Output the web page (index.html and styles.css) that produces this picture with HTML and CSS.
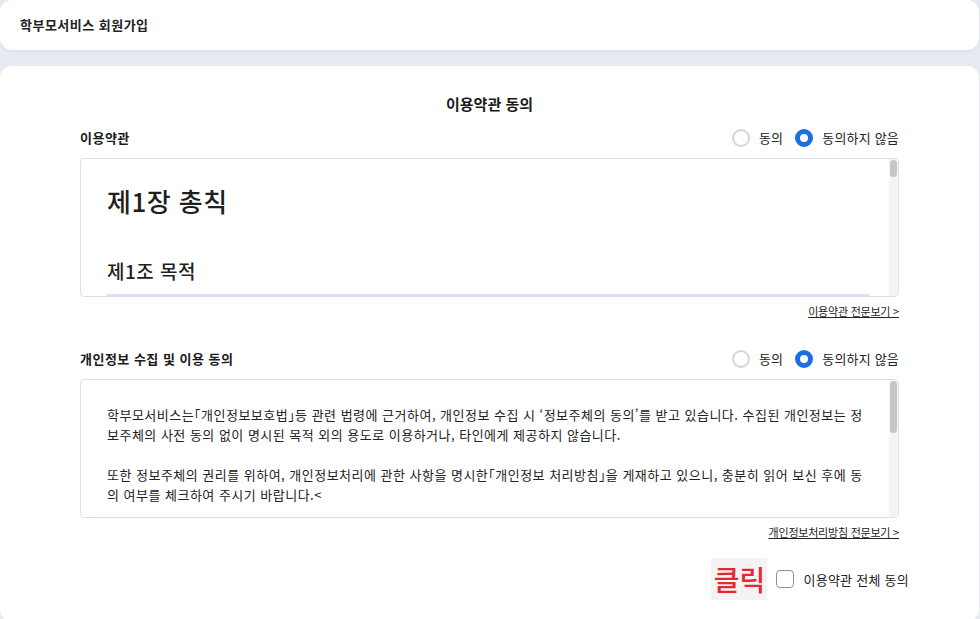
FILE: index.html
```html
<!DOCTYPE html>
<html lang="ko">
<head>
<meta charset="utf-8">
<title>학부모서비스 회원가입</title>
<link rel="stylesheet" href="styles.css">
</head>
<body>
<header class="topbar">
  <h1 class="topbar-title">학부모서비스 회원가입</h1>
</header>
<main class="card">
  <h2 class="page-title">이용약관 동의</h2>

  <section class="agree">
    <div class="agree-head">
      <h3 class="agree-label">이용약관</h3>
      <div class="radios">
        <label class="radio"><span class="radio-dot"></span><span>동의</span></label>
        <label class="radio"><span class="radio-dot is-checked"></span><span>동의하지 않음</span></label>
      </div>
    </div>
    <div class="terms-box">
      <div class="terms-content">
        <div class="terms-h1">제1장 총칙</div>
        <div class="terms-h2">제1조 목적</div>
      </div>
      <div class="scrollbar"><span class="thumb thumb-short"></span></div>
    </div>
    <div class="more"><a href="#" class="more-link">이용약관 전문보기 &gt;</a></div>
  </section>

  <section class="agree agree-second">
    <div class="agree-head">
      <h3 class="agree-label">개인정보 수집 및 이용 동의</h3>
      <div class="radios">
        <label class="radio"><span class="radio-dot"></span><span>동의</span></label>
        <label class="radio"><span class="radio-dot is-checked"></span><span>동의하지 않음</span></label>
      </div>
    </div>
    <div class="terms-box">
      <div class="terms-content terms-text">
        <p>학부모서비스는「개인정보보호법」등 관련 법령에 근거하여, 개인정보 수집 시 ‘정보주체의 동의’를 받고 있습니다. 수집된 개인정보는 정보주체의 사전 동의 없이 명시된 목적 외의 용도로 이용하거나, 타인에게 제공하지 않습니다.</p>
        <p>또한 정보주체의 권리를 위하여, 개인정보처리에 관한 사항을 명시한「개인정보 처리방침」을 게재하고 있으니, 충분히 읽어 보신 후에 동의 여부를 체크하여 주시기 바랍니다.&lt;</p>
      </div>
      <div class="scrollbar"><span class="thumb thumb-long"></span></div>
    </div>
    <div class="more"><a href="#" class="more-link">개인정보처리방침 전문보기 &gt;</a></div>
  </section>

  <div class="all-agree">
    <span class="click-tag">클릭</span>
    <label class="check"><span class="check-box"></span><span>이용약관 전체 동의</span></label>
  </div>
</main>
</body>
</html>
```

FILE: styles.css
```css
* { box-sizing: border-box; }
html, body { margin: 0; padding: 0; }
body {
  background: #e8ecf2;
  font-family: "Noto Sans CJK KR", "Noto Sans", sans-serif;
  color: #1f1f1f;
  letter-spacing: 0.03em;
  height: 619px;
  overflow: hidden;
}
.topbar {
  height: 50px;
  background: #fff;
  border-radius: 12px;
  margin-right: 1px;
  display: flex;
  align-items: center;
  padding-left: 20px;
  box-shadow: 0 1px 4px rgba(40, 60, 90, 0.08);
}
.topbar-title {
  margin: 0;
  font-size: 13px;
  font-weight: 700;
  color: #222;
  line-height: 20px;
}
.card {
  margin-top: 16px;
  margin-right: 1px;
  background: #fff;
  border-radius: 12px;
  padding: 28px 80px 0 80px;
  height: 555px;
}
.page-title {
  margin: 0;
  text-align: center;
  font-size: 15px;
  font-weight: 700;
  letter-spacing: 0;
  line-height: 20px;
  color: #1a1a1a;
}
.agree { margin-top: 14px; }
.agree-second { margin-top: 30px; }
.agree-head {
  display: flex;
  justify-content: space-between;
  align-items: center;
  height: 20px;
}
.agree-label {
  margin: 0;
  font-size: 13px;
  font-weight: 700;
  line-height: 20px;
  color: #1a1a1a;
}
.radios { display: flex; align-items: center; gap: 12px; }
.radio {
  display: flex;
  align-items: center;
  gap: 9px;
  font-size: 13px;
  letter-spacing: 0.015em;
  color: #222;
  line-height: 20px;
}
.radio-dot {
  width: 18px;
  height: 18px;
  border-radius: 50%;
  border: 2px solid #d2d6dc;
  background: #fff;
}
.radio-dot.is-checked { border: 5px solid #1a6fe3; }
.terms-box {
  margin-top: 10px;
  height: 139px;
  border: 1px solid #d8e1ef;
  border-radius: 4px;
  display: flex;
  overflow: hidden;
}
.terms-content {
  flex: 1;
  padding: 22px 26px 0 26px;
  overflow: hidden;
}
.terms-h1 {
  font-size: 26px;
  font-weight: 500;
  line-height: 39px;
  color: #1f1f1f;
}
.terms-h2 {
  margin-top: 37px;
  font-size: 19px;
  font-weight: 500;
  line-height: 27px;
  color: #1f1f1f;
  border-bottom: 2px solid #dde2ea;
  padding-bottom: 10px;
  margin-right: -6px;
}
.terms-text { padding: 25px 24px 0 26px; }
.terms-text p {
  margin: 0 0 20px 0;
  font-size: 13px;
  line-height: 20px;
  color: #222;
  font-feature-settings: "halt";
}
.scrollbar {
  width: 9px;
  background: #f4f4f4;
  flex: none;
  padding: 1px 0 0 1px;
}
.thumb {
  display: block;
  width: 7px;
  background: #c6c6c6;
  border-radius: 4px;
}
.thumb-short { height: 17px; }
.thumb-long { height: 52px; }
.more {
  margin-top: 6px;
  display: flex;
  justify-content: flex-end;
  line-height: 16px;
}
.more-link {
  font-size: 11px;
  letter-spacing: -0.02em;
  color: #222;
  text-decoration: underline;
}
.all-agree {
  margin-top: 18px;
  margin-right: -10px;
  display: flex;
  justify-content: flex-end;
  align-items: center;
  gap: 9px;
}
.click-tag {
  width: 56px;
  height: 42px;
  background: #f3f3f3;
  color: #e6272e;
  font-size: 28px;
  font-weight: 500;
  letter-spacing: 0;
  display: flex;
  align-items: center;
  justify-content: center;
}
.check {
  display: flex;
  align-items: center;
  gap: 9px;
  font-size: 13px;
  letter-spacing: 0.02em;
  color: #222;
}
.check-box {
  width: 18px;
  height: 18px;
  border: 1.5px solid #8a92a0;
  border-radius: 4px;
  background: #fff;
}
```
